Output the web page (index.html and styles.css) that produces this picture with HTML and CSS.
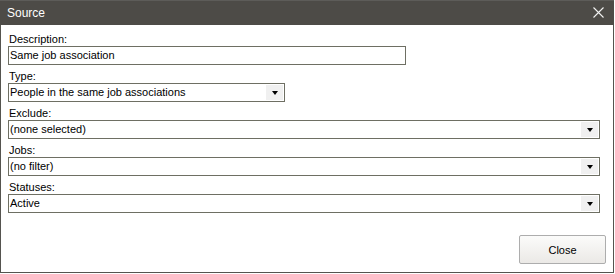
FILE: index.html
```html
<!DOCTYPE html>
<html>
<head>
<meta charset="utf-8">
<link rel="stylesheet" href="styles.css">
</head>
<body>
<div class="window">
  <div class="titlebar">
    <span class="title">Source</span>
    <svg class="close-x" width="11" height="11" viewBox="0 0 11 11"><path d="M0.5 0.5 L10.5 10.5 M10.5 0.5 L0.5 10.5" stroke="#f2f2f2" stroke-width="1.1" fill="none"/></svg>
  </div>
  <div class="content">
    <div class="field">
      <div class="label">Description:</div>
      <div class="box w-desc"><span class="val">Same job association</span></div>
    </div>
    <div class="field">
      <div class="label">Type:</div>
      <div class="box w-type"><span class="val">People in the same job associations</span><span class="drop"><i class="tri"></i></span></div>
    </div>
    <div class="field">
      <div class="label">Exclude:</div>
      <div class="box w-full"><span class="val">(none selected)</span><span class="drop"><i class="tri"></i></span></div>
    </div>
    <div class="field">
      <div class="label">Jobs:</div>
      <div class="box w-full"><span class="val">(no filter)</span><span class="drop"><i class="tri"></i></span></div>
    </div>
    <div class="field">
      <div class="label">Statuses:</div>
      <div class="box w-full"><span class="val">Active</span><span class="drop"><i class="tri"></i></span></div>
    </div>
    <div class="actions">
      <div class="btn">Close</div>
    </div>
  </div>
</div>
</body>
</html>
```
FILE: styles.css
```css
html, body {
  margin: 0;
  padding: 0;
  background: #ffffff;
}
body {
  font-family: "Liberation Sans", Arial, sans-serif;
  font-size: 11px;
  color: #000;
}
.window {
  width: 612px;
  height: 272px;
  border: 1px solid #55544f;
  border-top: none;
  display: flex;
  flex-direction: column;
  background: #fff;
}
.titlebar {
  height: 25px;
  background: #4d4b47;
  border-top: 1px solid #5d5c59;
  box-sizing: border-box;
  display: flex;
  align-items: center;
  justify-content: space-between;
  padding: 0 8px 1px 7px;
  margin: 0 -1px;
}
.title {
  color: #ffffff;
  font-size: 12px;
}
.close-x {
  display: block;
  margin-right: 2px;
}
.content {
  flex: 1;
  display: flex;
  flex-direction: column;
  padding: 7px 13px 8px 7px;
}
.field {
  display: flex;
  flex-direction: column;
  margin-bottom: 4px;
}
.label {
  height: 14px;
  line-height: 14px;
  padding-left: 1px;
}
.box {
  height: 19px;
  box-sizing: border-box;
  border: 1px solid #6e6f63;
  display: flex;
  align-items: center;
  padding: 0 1px 0 1px;
  background: #fff;
}
.val {
  flex: 1;
  line-height: 17px;
  white-space: nowrap;
}
.w-desc { width: 398px; }
.w-type { width: 277px; }
.w-full { width: 592px; }
.drop {
  width: 17px;
  height: 15px;
  background: #f0f0f0;
  display: flex;
  align-items: center;
  justify-content: center;
}
.tri {
  width: 0;
  height: 0;
  border-left: 3.5px solid transparent;
  border-right: 3.5px solid transparent;
  border-top: 4px solid #000;
  margin-top: 1px;
}
.actions {
  flex: 1;
  display: flex;
  justify-content: flex-end;
  align-items: flex-end;
  margin-right: -6px;
}
.btn {
  width: 87px;
  height: 29px;
  box-sizing: border-box;
  border: 1px solid #adadad;
  border-radius: 2px;
  background: linear-gradient(#fbfbfa, #ebe9e6);
  display: flex;
  align-items: center;
  justify-content: center;
  font-size: 11px;
}
```
